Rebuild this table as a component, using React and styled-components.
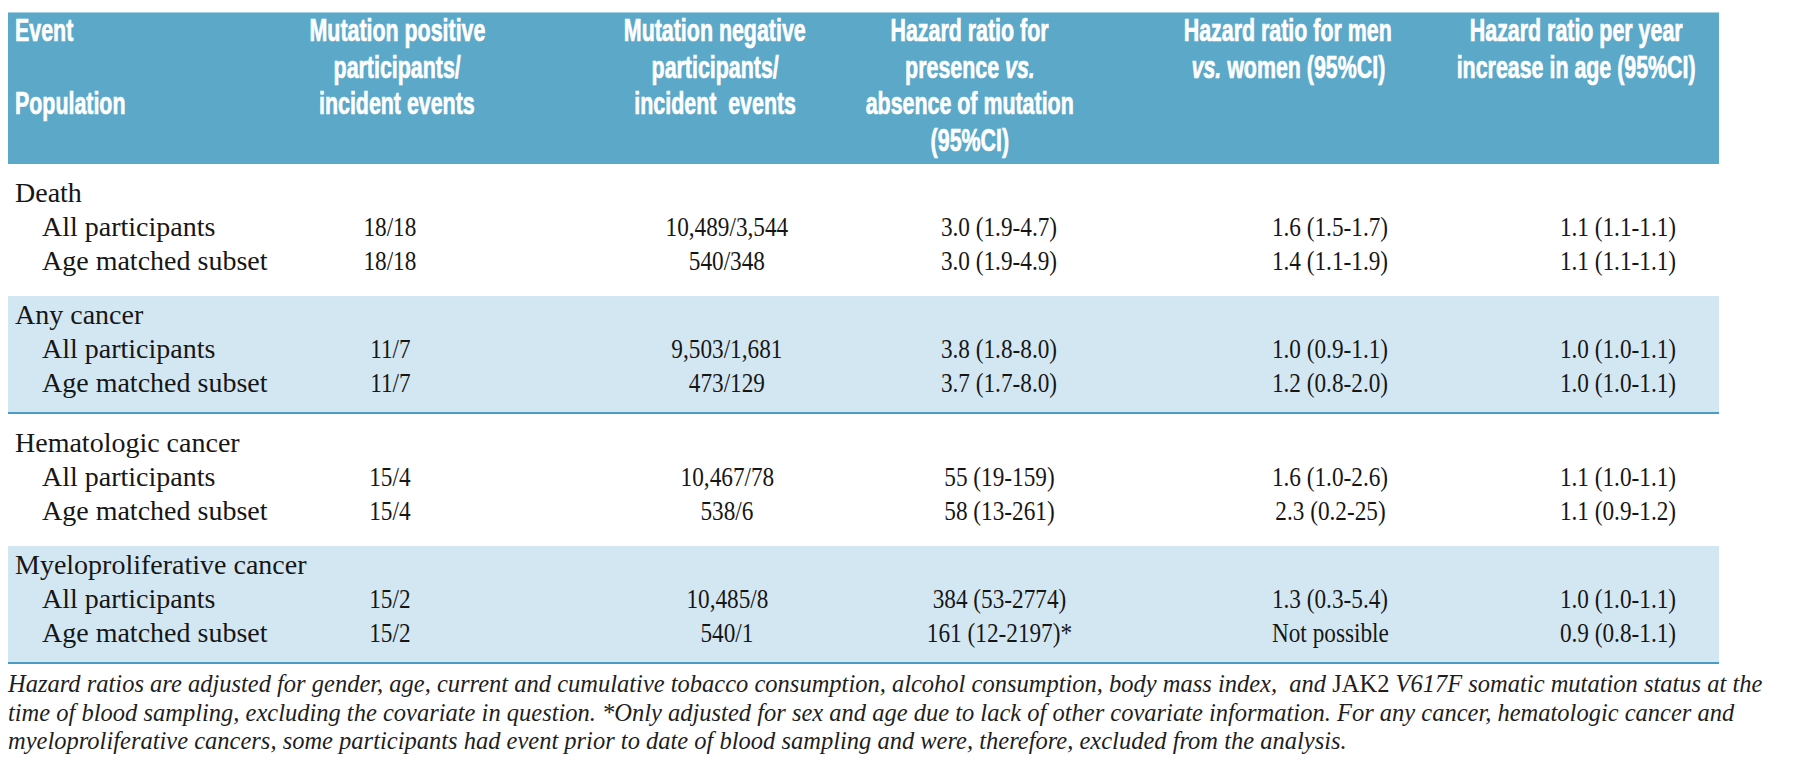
import React from 'react';
import styled, { createGlobalStyle } from 'styled-components';

const Global = createGlobalStyle`
  html, body { margin: 0; padding: 0; background: #ffffff; }
  body { width: 1800px; height: 767px; overflow: hidden; }
`;

const HEAD_COLS = '192px 394px 242px 268px 368px 208px 39px';
const BODY_COLS = '232px 300px 374px 170px 492px 84px 59px';

const Page = styled.div`
  padding: 12px 0 0 8px;
  width: 1711px;
  font-family: "Liberation Serif", "Times New Roman", serif;
  color: #161616;
`;

const Head = styled.div`
  display: grid;
  grid-template-columns: ${HEAD_COLS};
  height: 152px;
  box-sizing: border-box;
  background: #5ba8c8;
  border-top: 1px solid #a4d2e6;
  color: #ffffff;
  font-family: "Liberation Sans Narrow", "Liberation Sans", Arial, sans-serif;
  font-weight: 700;
  font-size: 31px;
  line-height: 36.5px;
  -webkit-text-stroke: 0.7px #ffffff;
`;

const HeadCell = styled.div`
  display: flex;
  flex-direction: column;
  align-items: ${(p) => (p.$left ? 'flex-start' : 'center')};
  padding-left: ${(p) => (p.$left ? '7px' : '0')};
`;

const HeadLine = styled.div`
  white-space: pre;
  min-height: 36.5px;
  transform: scaleX(0.69);
  transform-origin: ${(p) => (p.$left ? 'left center' : 'center center')};
`;

const Section = styled.section`
  background: ${(p) => (p.$band ? '#d3e7f3' : 'transparent')};
  border-bottom: ${(p) => (p.$band ? '2px solid #4b9cc4' : '0')};
  padding: ${(p) => (p.$band ? '2px 0 12px' : '12px 0 18px')};
  font-size: 28px;
  line-height: 34px;
`;

const Title = styled.div`
  padding-left: 7px;
  white-space: nowrap;
`;

const Row = styled.div`
  display: grid;
  grid-template-columns: ${BODY_COLS};
`;

const Label = styled.div`
  padding-left: 34px;
  white-space: nowrap;
`;

const Value = styled.div`
  display: flex;
  justify-content: center;
  white-space: nowrap;
`;

const Figure = styled.span`
  display: inline-block;
  transform: scaleX(0.83);
  transform-origin: center center;
`;

const Note = styled.div`
  padding-top: 6px;
  font-style: italic;
  font-size: 24.5px;
  line-height: 28.5px;
  color: #1e1e1e;
`;

const NoteLine = styled.div`
  white-space: nowrap;
`;

const Upright = styled.span`
  font-style: normal;
`;

const Em = styled.i`
  font-style: italic;
`;

const headers = [
  { left: true, lines: ['Event', '\u00a0', 'Population'] },
  { lines: ['Mutation positive', 'participants/', 'incident events'] },
  { lines: ['Mutation negative', 'participants/', 'incident  events'] },
  {
    lines: [
      'Hazard ratio for',
      <>presence <Em>vs.</Em></>,
      'absence of mutation',
      '(95%CI)',
    ],
  },
  { lines: ['Hazard ratio for men', <><Em>vs.</Em> women (95%CI)</>] },
  { lines: ['Hazard ratio per year', 'increase in age (95%CI)'] },
];

const sections = [
  {
    title: 'Death',
    rows: [
      ['All participants', '18/18', '10,489/3,544', '3.0 (1.9-4.7)', '1.6 (1.5-1.7)', '1.1 (1.1-1.1)'],
      ['Age matched subset', '18/18', '540/348', '3.0 (1.9-4.9)', '1.4 (1.1-1.9)', '1.1 (1.1-1.1)'],
    ],
  },
  {
    title: 'Any cancer',
    band: true,
    rows: [
      ['All participants', '11/7', '9,503/1,681', '3.8 (1.8-8.0)', '1.0 (0.9-1.1)', '1.0 (1.0-1.1)'],
      ['Age matched subset', '11/7', '473/129', '3.7 (1.7-8.0)', '1.2 (0.8-2.0)', '1.0 (1.0-1.1)'],
    ],
  },
  {
    title: 'Hematologic cancer',
    rows: [
      ['All participants', '15/4', '10,467/78', '55 (19-159)', '1.6 (1.0-2.6)', '1.1 (1.0-1.1)'],
      ['Age matched subset', '15/4', '538/6', '58 (13-261)', '2.3 (0.2-25)', '1.1 (0.9-1.2)'],
    ],
  },
  {
    title: 'Myeloproliferative cancer',
    band: true,
    rows: [
      ['All participants', '15/2', '10,485/8', '384 (53-2774)', '1.3 (0.3-5.4)', '1.0 (1.0-1.1)'],
      ['Age matched subset', '15/2', '540/1', '161 (12-2197)*', 'Not possible', '0.9 (0.8-1.1)'],
    ],
  },
];

export default function App() {
  return (
    <>
      <Global />
      <Page>
        <Head>
          {headers.map((h, i) => (
            <HeadCell key={i} $left={h.left}>
              {h.lines.map((l, j) => (
                <HeadLine key={j} $left={h.left}>{l}</HeadLine>
              ))}
            </HeadCell>
          ))}
        </Head>
        {sections.map((s) => (
          <Section key={s.title} $band={s.band}>
            <Title>{s.title}</Title>
            {s.rows.map((r) => (
              <Row key={r[0]}>
                <Label>{r[0]}</Label>
                {r.slice(1).map((v, k) => (
                  <Value key={k}>
                    <Figure>{v}</Figure>
                  </Value>
                ))}
              </Row>
            ))}
          </Section>
        ))}
        <Note>
          <NoteLine>
            Hazard ratios are adjusted for gender, age, current and cumulative tobacco consumption, alcohol consumption, body mass index,&nbsp; and <Upright>JAK2</Upright> V617F somatic mutation status at the
          </NoteLine>
          <NoteLine>
            time of blood sampling, excluding the covariate in question. *Only adjusted for sex and age due to lack of other covariate information. For any cancer, hematologic cancer and
          </NoteLine>
          <NoteLine>
            myeloproliferative cancers, some participants had event prior to date of blood sampling and were, therefore, excluded from the analysis.
          </NoteLine>
        </Note>
      </Page>
    </>
  );
}
